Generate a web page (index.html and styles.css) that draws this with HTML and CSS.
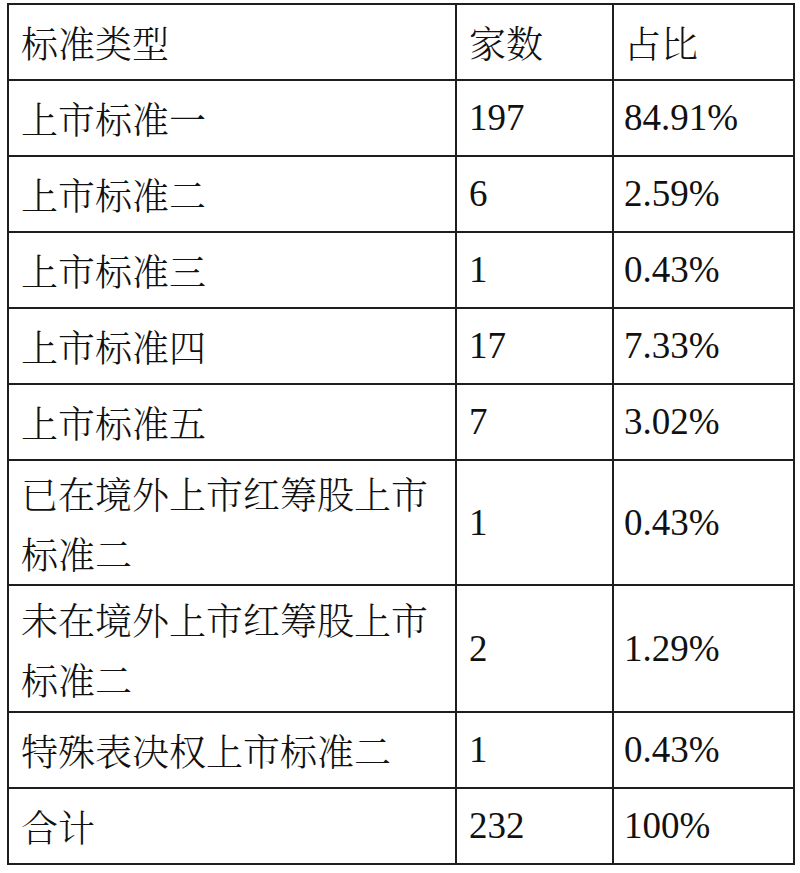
FILE: index.html
```html
<!DOCTYPE html>
<html lang="zh-CN">
<head>
<meta charset="utf-8">
<title>上市标准</title>
<link rel="stylesheet" href="styles.css">
</head>
<body>
<table class="stats">
  <colgroup>
    <col class="c-type">
    <col class="c-count">
    <col class="c-ratio">
  </colgroup>
  <tr class="row"><td>标准类型</td><td>家数</td><td>占比</td></tr>
  <tr class="row"><td>上市标准一</td><td class="num">197</td><td class="num">84.91%</td></tr>
  <tr class="row"><td>上市标准二</td><td class="num">6</td><td class="num">2.59%</td></tr>
  <tr class="row"><td>上市标准三</td><td class="num">1</td><td class="num">0.43%</td></tr>
  <tr class="row"><td>上市标准四</td><td class="num">17</td><td class="num">7.33%</td></tr>
  <tr class="row"><td>上市标准五</td><td class="num">7</td><td class="num">3.02%</td></tr>
  <tr class="row tall"><td>已在境外上市红筹股上市标准二</td><td class="num">1</td><td class="num">0.43%</td></tr>
  <tr class="row tall2"><td>未在境外上市红筹股上市标准二</td><td class="num">2</td><td class="num">1.29%</td></tr>
  <tr class="row"><td>特殊表决权上市标准二</td><td class="num">1</td><td class="num">0.43%</td></tr>
  <tr class="row"><td>合计</td><td class="num">232</td><td class="num">100%</td></tr>
</table>
</body>
</html>
```

FILE: styles.css
```css
html, body {
  background: #ffffff;
}
body {
  margin: 3px 0 0 7px;
}
.stats {
  border-collapse: collapse;
  table-layout: fixed;
  width: 786px;
  font-family: "Noto Serif CJK SC", "Noto Sans CJK SC", sans-serif;
  font-weight: 300;
  font-size: 37px;
  color: #111111;
}
.c-type { width: 448px; }
.c-count { width: 157px; }
.c-ratio { width: 181px; }
.stats td {
  border: 2px solid #1e1e1e;
  padding: 0 8px 0 12px;
  line-height: 60px;
  vertical-align: middle;
  text-align: left;
}
.stats td:nth-child(2) {
  padding-left: 12px;
}
.stats td:nth-child(3) {
  padding-left: 10px;
}
.stats td.num {
  font-family: "Liberation Serif", serif;
  font-weight: 400;
}
.row { height: 76px; }
.row.tall { height: 125px; }
.row.tall2 { height: 127px; }
```
